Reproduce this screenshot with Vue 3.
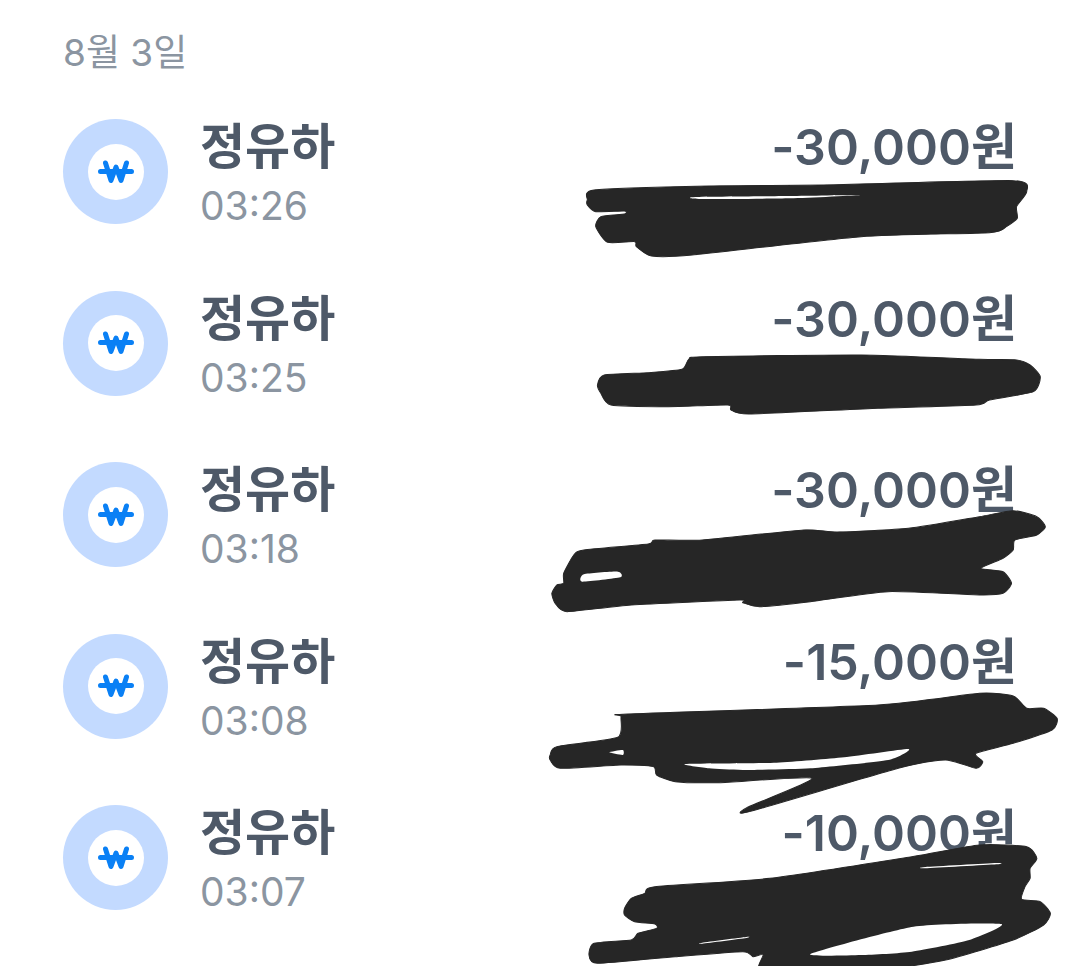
<template>
  <div class="page">
    <div class="date">8월 3일</div>
    <div class="list">
      <div v-for="item in rows" :key="item.time" class="row">
        <div class="ring">
          <div class="dot">
            <svg class="won" viewBox="0 0 36 24" width="36" height="24">
              <path d="M7.5 3 13 20.5 18 7 23 20.5 28.5 3M2.5 11.5H33.5" />
            </svg>
          </div>
        </div>
        <div class="info">
          <div class="name">정유하</div>
          <div class="time">{{ item.time }}</div>
        </div>
        <div class="amount">{{ item.amount }}</div>
      </div>
    </div>

    <!-- 가림 낙서 -->
    <svg class="scribble" viewBox="0 0 1080 966" width="1080" height="966">
      <g v-for="s in scribbles" :key="s.x + '-' + s.y" :transform="`translate(${s.x},${s.y}) scale(0.338,0.3333)`">
        <path v-for="(b, i) in s.blobs" :key="i" class="ink" :d="smooth(b)" />
        <path v-for="(h, i) in s.holes" :key="'h' + i" class="hole" :d="smooth(h)" />
      </g>
    </svg>
  </div>
</template>

<script setup>
const rows = [
  { time: '03:26', amount: '-30,000원' },
  { time: '03:25', amount: '-30,000원' },
  { time: '03:18', amount: '-30,000원' },
  { time: '03:08', amount: '-15,000원' },
  { time: '03:07', amount: '-10,000원' }
]

// 좌표는 확대 캡처 기준
const scribbles = [
  {
    x: 540, y: 110,
    blobs: [
      [140,270, 160,240, 500,228, 840,225, 1400,212, 1440,245, 1410,290, 1412,325, 1380,350, 1330,368, 950,380, 450,435, 330,438, 285,410, 280,395, 200,397, 165,350, 180,320, 250,312, 250,303, 165,305, 140,285],
      [170,825, 190,795, 320,788, 420,778, 440,748, 480,740, 950,735, 1300,748, 1410,750, 1450,765, 1480,800, 1460,845, 1330,870, 1290,885, 1000,895, 620,912, 565,900, 555,885, 380,890, 210,885, 180,850]
    ],
    holes: [
      [460,261, 740,258, 950,255, 740,265, 470,267]
    ]
  },
  {
    x: 540, y: 460,
    blobs: [
      [70,340, 100,285, 130,270, 320,252, 340,240, 480,240, 780,210, 880,216, 1090,205, 1300,170, 1400,152, 1470,170, 1495,200, 1470,225, 1405,240, 1400,270, 1370,295, 1305,325, 1370,335, 1395,370, 1370,400, 1300,405, 1030,395, 800,425, 650,440, 600,428, 590,420, 270,435, 80,455, 45,430, 35,400, 50,375, 70,370],
      [30,885, 50,860, 230,832, 240,770, 260,762, 1000,735, 1300,700, 1400,708, 1440,745, 1490,745, 1530,775, 1515,810, 1400,850, 1290,880, 1310,905, 1290,925, 1200,900, 1060,925, 620,1055, 612,1043, 805,955, 530,968, 400,965, 345,945, 335,920, 240,915, 60,925, 30,900]
    ],
    holes: [
      [130,343, 230,335, 237,352, 125,365],
      [205,877, 245,870, 245,885],
      [430,912, 700,908, 900,892, 1090,867, 1030,900, 800,925, 600,930, 500,925]
    ]
  },
  {
    x: 540, y: 800,
    blobs: [
      [250,325, 270,295, 310,280, 340,260, 680,235, 1100,170, 1300,135, 1440,140, 1470,175, 1450,205, 1450,235, 1435,260, 1425,298, 1480,305, 1510,340, 1490,375, 1400,420, 1200,480, 1000,510, 660,520, 660,465, 630,470, 600,455, 400,470, 170,490, 145,465, 160,430, 270,420, 290,400, 345,385, 340,372, 280,365, 250,345]
    ],
    holes: [
      [800,462, 1105,380, 1365,372, 1270,420, 1100,455, 950,465],
      [480,428, 610,411, 610,414, 480,431],
      [1140,201, 1350,189, 1350,193, 1140,205]
    ]
  }
]

// 점을 모두 지나는 닫힌 곡선
const smooth = (p) => {
  const pts = []
  for (let i = 0; i < p.length; i += 2) pts.push([p[i], p[i + 1]])
  const n = pts.length
  let d = `M${pts[0][0]} ${pts[0][1]}`
  for (let i = 0; i < n; i++) {
    const a = pts[(i - 1 + n) % n]
    const b = pts[i]
    const c = pts[(i + 1) % n]
    const e = pts[(i + 2) % n]
    const k = 0.1
    d += `C${b[0] + (c[0] - a[0]) * k} ${b[1] + (c[1] - a[1]) * k} ${c[0] - (e[0] - b[0]) * k} ${c[1] - (e[1] - b[1]) * k} ${c[0]} ${c[1]}`
  }
  return d + 'Z'
}
</script>

<style>
html, body {
  background: #fff;
}
</style>

<style scoped>
.page {
  position: relative;
  width: 1080px;
  height: 966px;
  overflow: hidden;
  background: #fff;
  font-family: Inter, "Noto Sans CJK KR", sans-serif;
}
.date {
  padding: 30px 0 0 63px;
  height: 119px;
  box-sizing: border-box;
  font-size: 37px;
  line-height: 46px;
  color: #8b95a1;
}
.row {
  display: flex;
  align-items: flex-start;
  height: 171.5px;
  padding: 0 63px 0 63px;
}
.ring {
  display: flex;
  align-items: center;
  justify-content: center;
  flex: none;
  width: 105px;
  height: 105px;
  border-radius: 50%;
  background: #c3daff;
}
.dot {
  display: flex;
  align-items: center;
  justify-content: center;
  width: 56px;
  height: 56px;
  border-radius: 50%;
  background: #fff;
}
.won path {
  fill: none;
  stroke: #0a80f5;
  stroke-width: 5;
  stroke-linecap: round;
  stroke-linejoin: round;
}
.info {
  margin-left: 32px;
}
.name {
  font-size: 49px;
  line-height: 56px;
  font-weight: 700;
  color: #4e5968;
}
.time {
  margin-top: 8px;
  font-size: 39px;
  line-height: 46px;
  color: #8b95a1;
}
.amount {
  margin-left: auto;
  font-size: 50px;
  line-height: 56px;
  font-weight: 600;
  color: #4e5968;
}
.scribble {
  position: absolute;
  left: 0;
  top: 0;
}
.ink {
  fill: #262626;
  stroke: #262626;
  stroke-width: 3;
  stroke-linejoin: round;
}
.hole {
  fill: #fff;
}
</style>
